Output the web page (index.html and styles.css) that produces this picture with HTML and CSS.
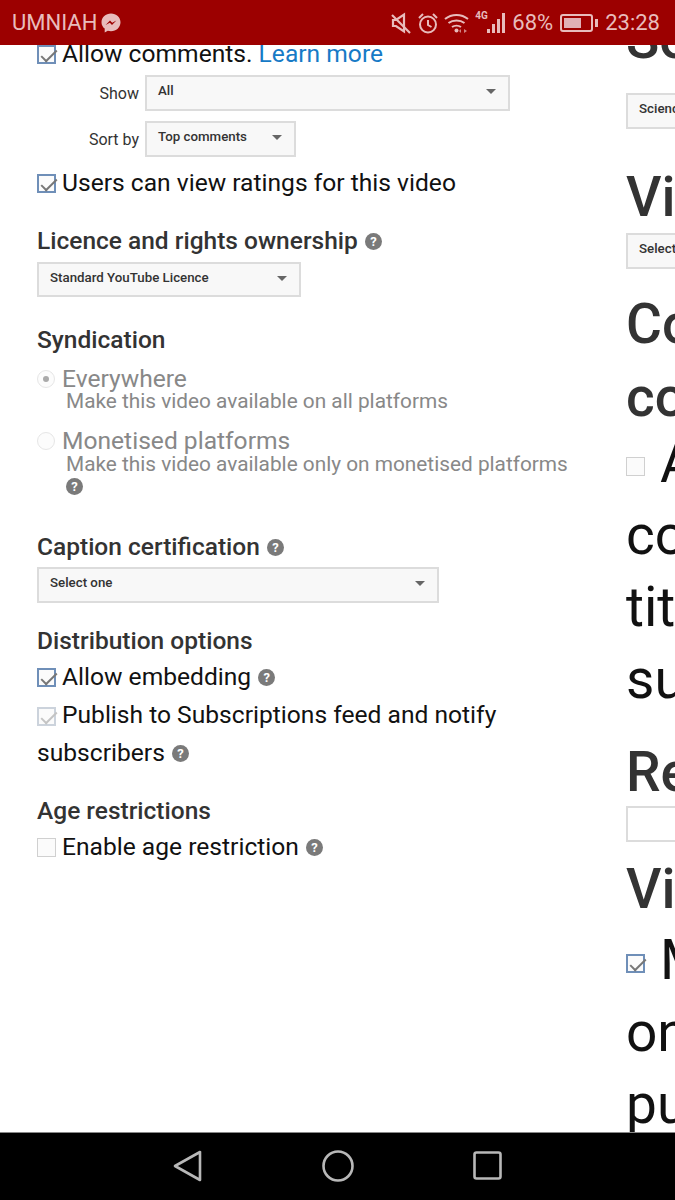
FILE: index.html
```html
<!DOCTYPE html>
<html lang="en">
<head>
    <meta charset="UTF-8">
    <meta name="viewport" content="width=device-width, initial-scale=1.0">
    <title>Advanced settings</title>
    <link rel="stylesheet" href="styles.css">
</head>
<body>
    <div class="status-bar">
        <div class="status-left">
            <span>UMNIAH</span>
            <svg class="messenger" width="20" height="20" viewBox="0 0 20 20">
                <path d="M10 .5C4.700.5.500 4.300.500 9.200c0 2.600 1.200 4.900 3.200 6.400V19.500l3.100-1.700c1 .3 2.100.4 3.200.4 5.300 0 9.500-3.900 9.500-9C19.500 4.300 15.300.5 10 .5z" fill="#e8bcbc"/>
                <path d="M4.600 12 9 7.400l2.200 2.300 4.200-2.300-4.400 4.600-2.200-2.300z" fill="#9c0000"/>
            </svg>
        </div>
        <div class="status-right">
            <svg class="ic-mute" width="20" height="22" viewBox="0 0 20 22" fill="none" stroke="#e8bcbc" stroke-width="2.200">
                <path d="M2 8h3l8-5.500v17L5 14H2z"/>
                <path d="M1 3l18 18"/>
            </svg>
            <svg class="ic-alarm" width="20" height="22" viewBox="0 0 20 22" fill="none" stroke="#e8bcbc" stroke-width="2">
                <circle cx="10" cy="12.500" r="8"/>
                <path d="M10 8v5l3.500 2M1 6l4-4M19 6l-4-4"/>
            </svg>
            <svg class="ic-wifi" width="25" height="22" viewBox="0 0 25 22" fill="none" stroke="#e8bcbc" stroke-width="2">
                <path d="M1 7c6.500-5.500 16.500-5.500 23 0M4.500 11c4.500-3.500 11.500-3.500 16 0M8 15c2.500-1.800 6.500-1.800 9 0"/>
                <circle cx="12.500" cy="18.500" r="2" fill="#e8bcbc" stroke="none"/>
                <path d="M17 17l-2 2 2 2zM20 17l3 2-3 2z" fill="#e8bcbc" stroke="none" opacity="0.7"/>
            </svg>
            <div class="signal">
                <span class="net">4G</span>
                <i class="b1"></i><i class="b2"></i><i class="b3"></i><i class="b4"></i>
            </div>
            <span class="pct">68%</span>
            <div class="battery"><div class="battery-fill"></div></div>
            <span class="clock">23:28</span>
        </div>
    </div>

    <div class="page">
        <div class="left">
            <div class="check-row first">
                <span class="box on"></span>
                <span>Allow comments. <a class="link">Learn more</a></span>
            </div>
            <div class="field show-field">
                <label>Show</label>
                <div class="select w-all">All<b class="arrow"></b></div>
            </div>
            <div class="field sort-field">
                <label>Sort by</label>
                <div class="select w-sort">Top comments<b class="arrow"></b></div>
            </div>
            <div class="check-row ratings">
                <span class="box on"></span>
                <span>Users can view ratings for this video</span>
            </div>

            <h3 class="heading licence">Licence and rights ownership <span class="help">?</span></h3>
            <div class="select w-licence">Standard YouTube Licence<b class="arrow"></b></div>

            <h3 class="heading syndication">Syndication</h3>
            <div class="radio-row">
                <span class="radio on"></span>
                <span class="radio-label">Everywhere</span>
            </div>
            <p class="radio-note first-note">Make this video available on all platforms</p>
            <div class="radio-row second">
                <span class="radio"></span>
                <span class="radio-label">Monetised platforms</span>
            </div>
            <p class="radio-note">Make this video available only on monetised platforms</p>
            <p class="radio-help"><span class="help">?</span></p>

            <h3 class="heading caption">Caption certification <span class="help">?</span></h3>
            <div class="select w-caption">Select one<b class="arrow"></b></div>

            <h3 class="heading distribution">Distribution options</h3>
            <div class="check-row tall">
                <span class="box on"></span>
                <span>Allow embedding <span class="help">?</span></span>
            </div>
            <div class="check-text">
                <span class="box on dim"></span>Publish to Subscriptions feed and notify subscribers <span class="help">?</span>
            </div>

            <h3 class="heading age">Age restrictions</h3>
            <div class="check-row tall">
                <span class="box"></span>
                <span>Enable age restriction <span class="help">?</span></span>
            </div>
        </div>

        <div class="right">
            <div class="big-head cut">Se</div>
            <div class="select r-cat">Science &amp; Technology</div>
            <div class="big-head vi">Video language</div>
            <div class="select r-lang">Select language</div>
            <div class="big-head co1">Community</div>
            <div class="big-head co2">contributions</div>
            <div class="big-text allow"><span class="box big"></span>Allow viewers to</div>
            <div class="big-text">contribute translated</div>
            <div class="big-text">titles, descriptions and</div>
            <div class="big-text">subtitles</div>
            <div class="big-head re">Recorded</div>
            <div class="select r-date"></div>
            <div class="big-head vi2">Video statistics</div>
            <div class="big-text notify"><span class="box big on"></span>Make video statistics</div>
            <div class="big-text">on the watch page</div>
            <div class="big-text">publicly visible</div>
        </div>
    </div>

    <div class="nav-bar">
        <svg width="34" height="34" viewBox="0 0 34 34" fill="none" stroke="#b8b8b8" stroke-width="2.600" stroke-linejoin="round">
            <path d="M29 3v28L4 17z"/>
        </svg>
        <svg width="34" height="34" viewBox="0 0 34 34" fill="none" stroke="#b8b8b8" stroke-width="2.600">
            <circle cx="17" cy="17" r="14.500"/>
        </svg>
        <svg width="34" height="34" viewBox="0 0 34 34" fill="none" stroke="#b8b8b8" stroke-width="2.600" stroke-linejoin="round">
            <rect x="3.500" y="3.500" width="26" height="26" rx="2"/>
        </svg>
    </div>
</body>
</html>
```

FILE: styles.css
```css
* {
    margin: 0;
    padding: 0;
    box-sizing: border-box;
}

html, body {
    height: 1200px;
    overflow: hidden;
}

body {
    font-family: Roboto, "Liberation Sans", sans-serif;
    background: white;
    color: #111;
    display: flex;
    flex-direction: column;
}

/* phone chrome */
.status-bar {
    height: 45px;
    flex-shrink: 0;
    background: #9c0000;
    color: #e8bcbc;
    display: flex;
    align-items: center;
    justify-content: space-between;
    padding: 0 15px 0 12px;
    font-size: 22px;
    position: relative;
    z-index: 2;
}

.status-left,
.status-right {
    display: flex;
    align-items: center;
}

.status-left {
    gap: 4px;
}

.ic-mute { margin-right: 7px; }
.ic-alarm { margin-right: 6px; }
.ic-wifi { margin-right: 6px; }

.signal {
    display: flex;
    align-items: flex-end;
    gap: 2px;
    height: 20px;
    position: relative;
    width: 33px;
    padding-left: 12px;
    margin-right: 4px;
}

.signal .net {
    position: absolute;
    left: 0;
    top: -3px;
    font-size: 10px;
    font-weight: 700;
}

.signal i {
    display: block;
    width: 3px;
    background: #e8bcbc;
}

.signal .b1 { height: 4px; }
.signal .b2 { height: 9px; }
.signal .b3 { height: 14px; }
.signal .b4 { height: 20px; }

.battery {
    width: 33px;
    height: 18px;
    border: 2px solid #e8bcbc;
    border-radius: 3px;
    padding: 2px;
    margin-left: 7px;
    position: relative;
}

.battery::after {
    content: "";
    position: absolute;
    right: -7px;
    top: 3px;
    width: 3px;
    height: 8px;
    background: #e8bcbc;
}

.battery-fill {
    height: 100%;
    width: 68%;
    background: #e0b0b6;
}

.clock {
    margin-left: 12px;
}

.nav-bar {
    height: 68px;
    flex-shrink: 0;
    background: black;
    border-top: 1px solid #888;
    display: flex;
    align-items: center;
    justify-content: center;
    gap: 116px;
    padding-bottom: 2px;
}

/* two columns, right one runs off the screen */
.page {
    flex: 1;
    display: flex;
    overflow: hidden;
    min-height: 0;
}

.left {
    width: 626px;
    flex-shrink: 0;
    padding: 0 50px 0 37px;
    font-size: 24.6px;
}

.right {
    flex: 1;
    min-width: 0;
    overflow: hidden;
    white-space: nowrap;
}

.check-row {
    display: flex;
    align-items: center;
    gap: 6px;
    line-height: 30px;
}

.check-row.first {
    margin-top: -6px;
}

.box {
    width: 19px;
    height: 19px;
    flex-shrink: 0;
    display: inline-block;
    border: 1px solid #d0d0d0;
    background: #fbfbfb;
    position: relative;
}

.box.on {
    border: 2px solid #6f8fb8;
}

.box.on::after {
    content: "";
    position: absolute;
    left: 6px;
    top: -1px;
    width: 6px;
    height: 14px;
    border: solid #777;
    border-width: 0 2.500px 2.500px 0;
    transform: rotate(45deg);
}

.box.dim {
    border-color: #ccd3dc;
}

.box.dim::after {
    border-color: #c4c4c4;
}

.link {
    color: #167ac6;
}

.field {
    display: flex;
    align-items: center;
    font-size: 16px;
    color: #333;
}

.field label {
    width: 102px;
    text-align: right;
    margin-right: 6px;
}

.show-field {
    margin-top: 6px;
}

.sort-field {
    margin-top: 10px;
}

.select {
    height: 36px;
    background: #f8f8f8;
    border: 2px solid #dcdcdc;
    font-size: 13.3px;
    font-weight: 500;
    color: #333;
    padding: 6px 11px 0;
    position: relative;
}

.arrow {
    position: absolute;
    right: 12px;
    top: 12px;
    border: 5px solid transparent;
    border-top: 5px solid #666;
}

.w-all { width: 365px; }
.w-sort { width: 151px; }
.w-licence { width: 264px; height: 35px; margin-top: 6px; }
.w-caption { width: 402px; margin-top: 5px; }

.ratings {
    margin-top: 11px;
}

.heading {
    font-size: 24.5px;
    font-weight: 500;
    color: #333;
    line-height: 30px;
}

.licence { margin-top: 28px; }
.syndication { margin-top: 28px; }
.caption { margin-top: 33px; }
.distribution { margin-top: 23px; }
.age { margin-top: 24px; }

.help {
    display: inline-block;
    width: 17px;
    height: 17px;
    border-radius: 50%;
    background: #7a7a7a;
    color: white;
    font-size: 13px;
    font-weight: 700;
    line-height: 17px;
    text-align: center;
    vertical-align: 3.500px;
    margin-left: 1px;
}

.radio-row {
    display: flex;
    align-items: center;
    gap: 7px;
    margin-top: 13px;
    line-height: 22px;
    color: #888;
}

.radio-row.second {
    margin-top: 17px;
}

.radio {
    width: 18px;
    height: 18px;
    border-radius: 50%;
    border: 1px solid #e6e6e6;
    background: #fcfcfc;
    position: relative;
}

.radio.on::after {
    content: "";
    position: absolute;
    left: 5px;
    top: 5px;
    width: 6px;
    height: 6px;
    border-radius: 50%;
    background: #aaa;
}

.radio-note {
    font-size: 20.8px;
    line-height: 24px;
    color: #888;
    padding-left: 29px;
}

.first-note {
    margin-top: -1px;
}

.radio-help {
    line-height: 22px;
    padding: 1px 0 0 27px;
    font-size: 16px;
}

.radio-help .help {
    margin-left: 2px;
    vertical-align: 2px;
}

.check-row.tall {
    line-height: 38px;
    margin-top: 2px;
}

.check-text {
    line-height: 38px;
}

.check-text .box {
    vertical-align: -3px;
    margin-right: 6px;
}

/* right column */
.big-head {
    font-size: 55px;
    font-weight: 500;
    color: #333;
    line-height: 60px;
}

.big-text {
    font-size: 55px;
    color: #111;
    line-height: 72px;
}

.box.big {
    vertical-align: 6px;
    margin-right: 15px;
}

.r-cat, .r-lang, .r-date {
    width: 200px;
}

.cut { margin-top: -36px; }
.r-cat { margin-top: 24px; }
.vi { margin-top: 38px; }
.r-lang { margin-top: 6px; }
.co1 { margin-top: 25px; }
.co2 { margin-top: 13px; }
.allow { margin-top: 0; }
.re { margin-top: 27px; }
.r-date { margin-top: 4px; background: white; }
.vi2 { margin-top: 17px; }
.notify { margin-top: 5px; }
```
